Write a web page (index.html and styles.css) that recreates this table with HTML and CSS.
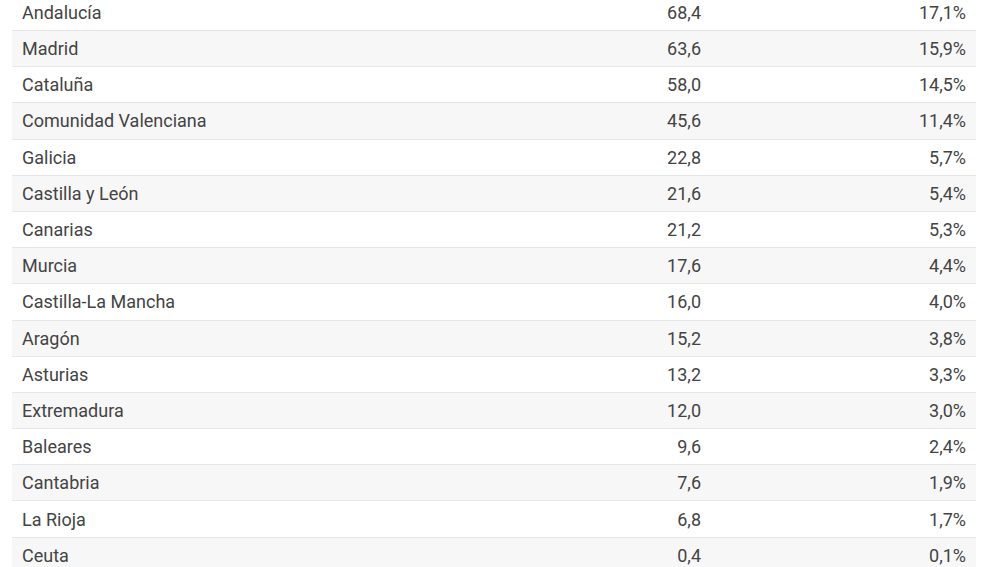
FILE: index.html
```html
<!DOCTYPE html>
<html lang="es">
<head>
<meta charset="utf-8">
<title>Tabla</title>
<link rel="stylesheet" href="styles.css">
</head>
<body>
<div class="table">
  <div class="row"><span class="name">Andalucía</span><span class="num">68,4</span><span class="pct">17,1%</span></div>
  <div class="row"><span class="name">Madrid</span><span class="num">63,6</span><span class="pct">15,9%</span></div>
  <div class="row"><span class="name">Cataluña</span><span class="num">58,0</span><span class="pct">14,5%</span></div>
  <div class="row"><span class="name">Comunidad Valenciana</span><span class="num">45,6</span><span class="pct">11,4%</span></div>
  <div class="row"><span class="name">Galicia</span><span class="num">22,8</span><span class="pct">5,7%</span></div>
  <div class="row"><span class="name">Castilla y León</span><span class="num">21,6</span><span class="pct">5,4%</span></div>
  <div class="row"><span class="name">Canarias</span><span class="num">21,2</span><span class="pct">5,3%</span></div>
  <div class="row"><span class="name">Murcia</span><span class="num">17,6</span><span class="pct">4,4%</span></div>
  <div class="row"><span class="name">Castilla-La Mancha</span><span class="num">16,0</span><span class="pct">4,0%</span></div>
  <div class="row"><span class="name">Aragón</span><span class="num">15,2</span><span class="pct">3,8%</span></div>
  <div class="row"><span class="name">Asturias</span><span class="num">13,2</span><span class="pct">3,3%</span></div>
  <div class="row"><span class="name">Extremadura</span><span class="num">12,0</span><span class="pct">3,0%</span></div>
  <div class="row"><span class="name">Baleares</span><span class="num">9,6</span><span class="pct">2,4%</span></div>
  <div class="row"><span class="name">Cantabria</span><span class="num">7,6</span><span class="pct">1,9%</span></div>
  <div class="row"><span class="name">La Rioja</span><span class="num">6,8</span><span class="pct">1,7%</span></div>
  <div class="row"><span class="name">Ceuta</span><span class="num">0,4</span><span class="pct">0,1%</span></div>
</div>
</body>
</html>
```
FILE: styles.css
```css
html, body {
  margin: 0;
  padding: 0;
  background: #ffffff;
  overflow: hidden;
}
body {
  font-family: Roboto, "Liberation Sans", sans-serif;
  font-size: 18px;
  font-weight: 400;
  color: #444444;
}
.table {
  width: 964px;
  margin: -6.2px 0 0 12px;
}
.row {
  display: grid;
  grid-template-columns: 490px 209px 265px;
  align-items: center;
  height: 36.2px;
  box-sizing: border-box;
  border-top: 1px solid #e6e6e6;
  background: #ffffff;
}
.row:nth-child(even) {
  background: #f7f7f7;
}
.name {
  padding-left: 10px;
}
.num, .pct {
  text-align: right;
  padding-right: 10px;
}
```
